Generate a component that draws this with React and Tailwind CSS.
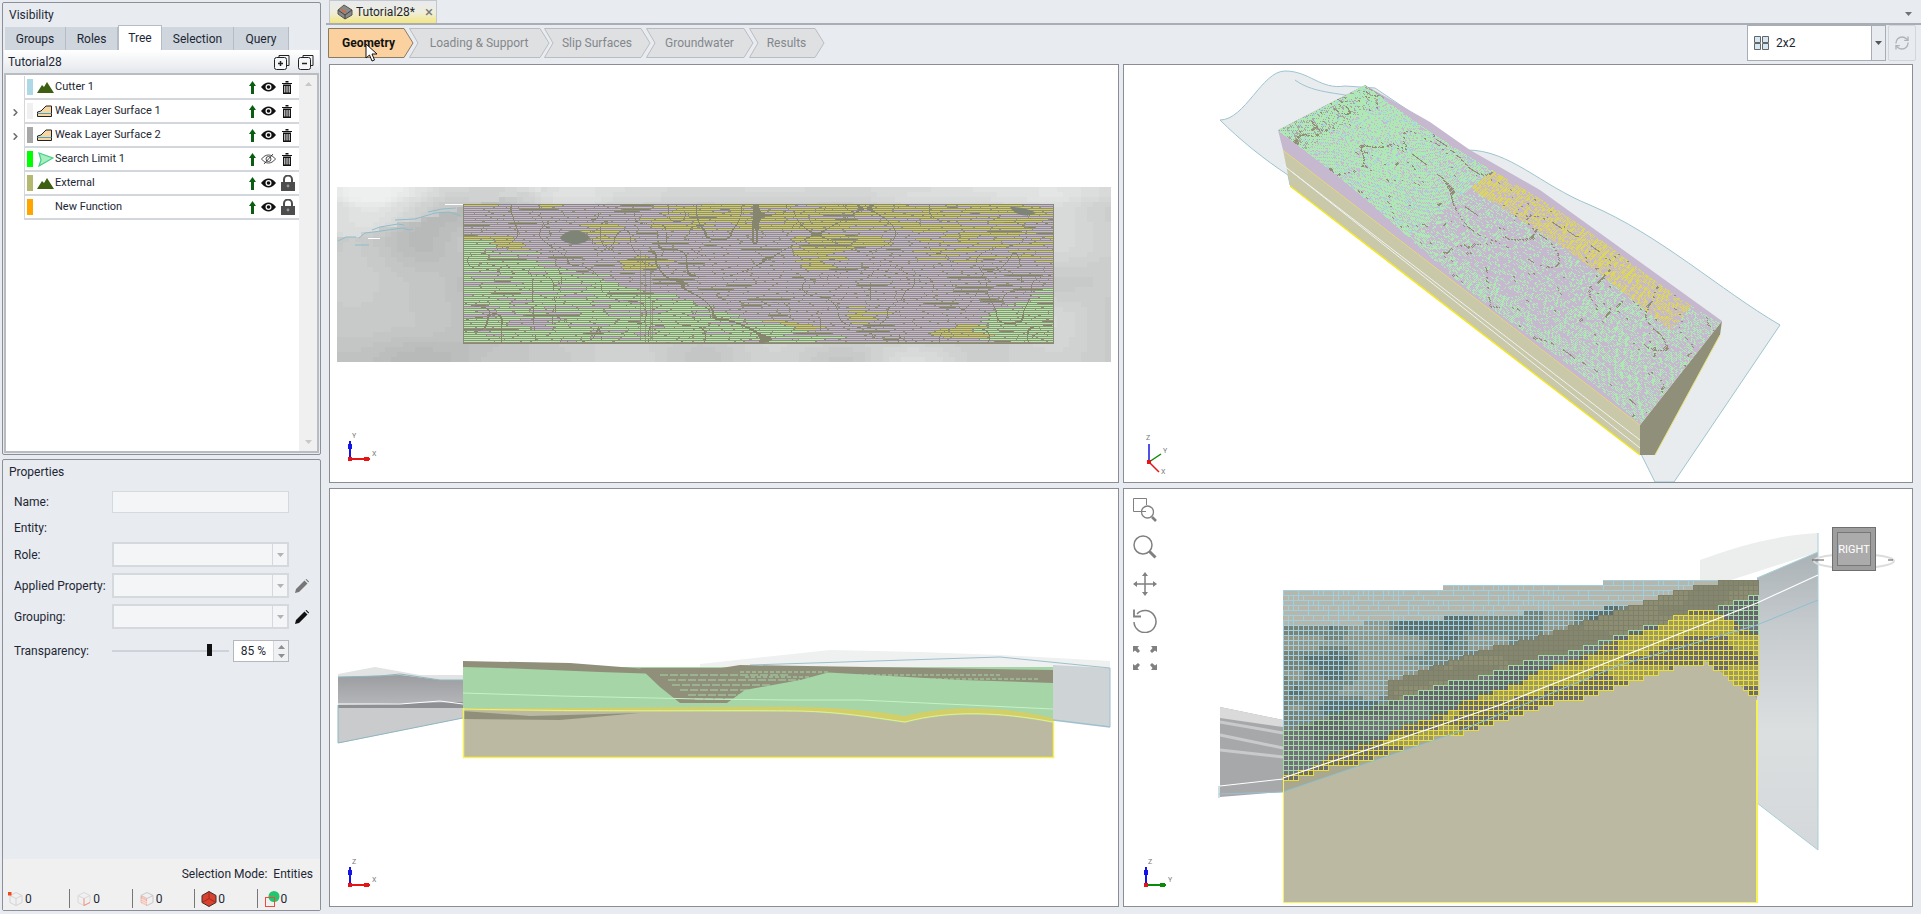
import React from 'react';
import { ChevronRight, RefreshCw } from 'lucide-react';

// deterministic noise so the model views look the same on every render
const hash = (x, y) => {
  const s = Math.sin(x * 127.1 + y * 311.7) * 43758.5453;
  return s - Math.floor(s);
};
const noise = (x, y) => {
  const ix = Math.floor(x), iy = Math.floor(y);
  const fx = x - ix, fy = y - iy;
  const sx = fx * fx * (3 - 2 * fx), sy = fy * fy * (3 - 2 * fy);
  const a = hash(ix, iy), b = hash(ix + 1, iy), c = hash(ix, iy + 1), d = hash(ix + 1, iy + 1);
  return a + (b - a) * sx + (c - a) * sy + (a - b - c + d) * sx * sy;
};

// top view: mottled ground around the block
const planGround = () => {
  const out = {};
  for (let y = 187; y < 361; y += 5) {
    for (let x = 337; x < 1110; x += 6) {
      let g = 208 + (noise(x / 70, y / 40) - 0.5) * 26;
      const d = Math.hypot((x - 368) / 75, (y - 195) / 42);
      if (d < 1) g += (1 - d) * 40;
      if (y > 205 + (463 - x) * 0.25) g -= 16 * Math.max(0, Math.min(1, (600 - x) / 140));
      if (y < 204) g += 10 * Math.min(1, (204 - y) / 10);
      const level = Math.min(238, Math.round(g / 4) * 4);
      const c = `rgb(${level},${level + 2},${level + 2})`;
      out[c] = (out[c] || '') + `M${x} ${y}h6v5h-6z`;
    }
  }
  return out;
};
const planCells = planGround();

// top view: contour dashes inside the block
const planTexture = () => {
  const out = { lilac: '', green: '', yellow: '', tan: '', contour: '' };
  for (let y = 205; y < 343; y += 2) {
    let x = 464;
    while (x < 1052) {
      const len = Math.min(6 + hash(x, y) * 34, 1053 - x);
      const u = (x - 463) / 590, v = (y - 204) / 140;
      const n = noise(x / 45, y / 22);
      let c = 'lilac';
      if (v > 0.28 + u * 1.15 + (n - 0.5) * 0.1) c = hash(y, x) < 0.8 ? 'green' : 'lilac';
      else if (u > 0.86 && v > 0.55 + (1 - u) * 2) c = 'green';
      else if (v < 0.18 && u > 0.3 && u < 0.95) c = hash(y, x) < 0.75 ? 'yellow' : 'lilac';
      else if (v < 0.42 && u > 0.75) c = hash(y, x) < 0.4 ? 'yellow' : 'lilac';
      else if (n < 0.3) c = 'yellow';
      if (hash(x * 2, y) < 0.05) c = 'tan';
      out[c] += `M${x.toFixed(0)} ${y + 0.5}h${len.toFixed(0)}`;
      x += len + 1 + hash(y, x * 3) * 1.500;
    }
  }
  for (let y = 205; y < 343; y += 1) {
    for (let x = 464; x < 1052; x += 1) {
      if (Math.abs(noise(x / 48, y / 26) - 0.5) < 0.006 || Math.abs(noise(x / 26 + 7, y / 40 + 3) - 0.5) < 0.004) {
        out.contour += `M${x} ${y}h1v1h-1z`;
      }
    }
  }
  return out;
};
const plan = planTexture();

// isometric view: dashes and speckle along the long axis of the top face
const isoPoint = (u, v) => {
  const x = (1 - u) * (1 - v) * 1278 + u * (1 - v) * 1640 + (1 - u) * v * 1365 + u * v * 1722;
  const y = (1 - u) * (1 - v) * 130 + u * (1 - v) * 425 + (1 - u) * v * 85 + u * v * 321;
  return [x, y];
};
const isoTexture = () => {
  const out = { green: '', yellow: '', tan: '', blue: '' };
  for (let i = 0; i < 80; i++) {
    const v0 = i / 80;
    for (let j = 0; j < 230; j++) {
      const u = j / 230;
      const v = v0 + Math.sin(u * 9 + v0 * 3) * 0.025;
      const r = hash(i, j);
      let c = null;
      if (u < 0.36 && r < 0.85) c = r < 0.08 ? 'blue' : 'green';
      else if (v0 > 0.74 && u > 0.3 && u < 0.92 && r < 0.65) c = 'yellow';
      else if (v0 < 0.14 && r < 0.6) c = 'green';
      else if (u > 0.72 && r < 0.55) c = 'green';
      else if (r < 0.38) c = 'green';
      if (Math.abs(noise(u * 9, v0 * 5) - 0.5) < 0.008 || Math.abs(noise(u * 22 + 4, v0 * 6 + 9) - 0.5) < 0.005) c = 'tan';
      if (!c) continue;
      const [a, b] = isoPoint(u, v);
      const [d, e] = isoPoint(u + 0.005, v);
      out[c] += `M${a.toFixed(1)} ${b.toFixed(1)}L${d.toFixed(1)} ${e.toFixed(1)}`;
    }
  }
  return out;
};
const iso = isoTexture();

// section view: voxel grid, one path per fill and per line colour
const sectionGrid = () => {
  const fills = {};
  const lines = { blue: '', green: '', yellow: '', tan: '' };
  const fill = (c, d) => { fills[c] = (fills[c] || '') + d; };
  for (let x = 1283; x < 1757; x += 5) {
    for (let y = 575; y < 790; y += 5) {
      const t = (x - 1283) / 474;
      const top = 590 - Math.floor(t * 3) * 5;
      if (y < top) continue;
      const stairX = x - ((x - 1283) % 15);
      const floor = x < 1700 ? 778 - (stairX - 1283) * 0.29 : 657 + (x - 1700) * 0.7;
      if (y > floor) continue;
      const n = noise(x / 38, y / 16);
      const greenTop = 727 - (stairX - 1283) * 0.285;
      const bandTop = greenTop - 18 - t * 10;
      const yellowTop = floor - (5 + t * 55);
      const d = `M${x} ${y}h5v5h-5z`;
      const light = y < 625 - t * 30;
      if (y >= yellowTop) {
        fill(n > 0.55 ? '#a09a5e' : '#6e6c70', d);
        lines.yellow += d;
      } else if (y >= greenTop) {
        fill(n > 0.45 ? '#66646f' : '#72707a', d);
        lines.green += d;
      } else if (y >= bandTop && t > 0.22) {
        fill(n > 0.5 ? '#8d8d74' : '#85866f', d);
        lines.tan += d;
      } else if (light) {
        fill(n > 0.86 ? '#84897f' : '#b6b6aa', d);
        lines.blue += `M${x} ${y}h5` + (hash(x, y) < 0.4 ? `M${x} ${y}v5` : '');
      } else {
        fill(n > 0.66 ? '#5f6f6c' : n > 0.38 ? '#7a8275' : '#969686', d);
        lines.blue += d;
      }
    }
  }
  return { fills, lines };
};
const section = sectionGrid();

const ROWS = [
  { name: 'Cutter 1', color: '#add8e6', icon: 'hill', last: 'trash' },
  { name: 'Weak Layer Surface 1', color: '#f0f0f0', icon: 'layer', last: 'trash', expand: true },
  { name: 'Weak Layer Surface 2', color: '#a8a8a8', icon: 'layer', last: 'trash', expand: true },
  { name: 'Search Limit 1', color: '#00ff00', icon: 'limit', last: 'trash', hidden: true },
  { name: 'External', color: '#b5b86f', icon: 'hill', last: 'lock' },
  { name: 'New Function', color: '#ffa500', last: 'lock' },
];

const TABS = [
  { label: 'Groups', w: 'w-[61px]' },
  { label: 'Roles', w: 'w-[52px]' },
  { label: 'Tree', w: 'w-[44px]', active: true },
  { label: 'Selection', w: 'w-[72px]' },
  { label: 'Query', w: 'w-[55px]' },
];

const STEPS = [
  { label: 'Geometry', w: 'w-[86px]', tip: 85, active: true },
  { label: 'Loading & Support', w: 'w-[141px]', tip: 140, ml: '-ml-[5px]' },
  { label: 'Slip Surfaces', w: 'w-[107px]', tip: 106, ml: '-ml-[6px]' },
  { label: 'Groundwater', w: 'w-[108px]', tip: 107, ml: '-ml-[5px]' },
  { label: 'Results', w: 'w-[76px]', tip: 75, ml: '-ml-[5px]' },
];

const HillIcon = () => (
  <svg width="17" height="11" viewBox="0 0 17 11"><path d="M0 11 5 3 7 5 10 0 17 11z" fill="#3d5f12" /></svg>
);
const LayerIcon = () => (
  <svg width="15" height="12" viewBox="0 0 15 12">
    <path d="M.5 7 4 6l5-5h5.500v10.500H.5z" fill="#f6d7a4" stroke="#222" />
    <path d="M.5 8.500h14" stroke="#4aa3c7" />
  </svg>
);
const LimitIcon = () => (
  <svg width="17" height="15" viewBox="0 0 17 15">
    <path d="M2 1 16 6 2 14l2-6z" fill="#a8eec0" stroke="#3fcf86" strokeWidth="1.200" />
  </svg>
);
const UpArrow = () => (
  <svg width="7" height="13" viewBox="0 0 7 13"><path d="M3.500 0 7 5H5v8H2V5H0z" fill="#0b5d12" /></svg>
);
const EyeIcon = ({ off }) => (
  <svg width="15" height="10" viewBox="0 0 15 10">
    {off ? (
      <>
        <path d="M.5 5C3 2 5 1 7.500 1s4.500 1 7 4c-2.500 3-4.500 4-7 4s-4.500-1-7-4z" fill="none" stroke="#222" strokeWidth=".8" />
        <circle cx="7.500" cy="5" r="2.500" fill="none" stroke="#222" strokeWidth=".8" />
        <path d="M3 10 12 0" stroke="#222" strokeWidth=".8" />
      </>
    ) : (
      <>
        <path d="M0 5C3 1.500 5 .5 7.500.5s4.500 1 7.500 4.500c-3 3.500-5 4.500-7.500 4.500S3 8.500 0 5z" fill="#111" />
        <circle cx="7.500" cy="5" r="3" fill="#fff" />
        <circle cx="7.500" cy="5" r="1.800" fill="#111" />
      </>
    )}
  </svg>
);
const TrashIcon = () => (
  <svg width="10" height="13" viewBox="0 0 10 13">
    <path d="M0 2h10v1H0zM3.500 0h3v1.500h-3z" fill="#111" />
    <path d="M1 3.500h8V13H1z" fill="#111" />
    <path d="M2.800 5v6.500M5 5v6.500M7.200 5v6.500" stroke="#fff" />
  </svg>
);
const LockIcon = () => (
  <svg width="14" height="16" viewBox="0 0 14 16">
    <path d="M3 7V4.500a4 4 0 0 1 8 0V7" fill="none" stroke="#4d4d4d" strokeWidth="2" />
    <path d="M0 7h14v9H0z" fill="#4d4d4d" />
    <circle cx="7" cy="11" r="1.400" fill="#999" />
  </svg>
);
const TreeToggle = ({ minus }) => (
  <svg width="16" height="16" viewBox="0 0 16 16" fill="none" stroke="#222">
    <path d="M5 3V1.500h10v10h-2" />
    <rect x=".5" y="3.500" width="12" height="12" rx="2" fill="#f5f6f8" />
    <path d={minus ? 'M4 9.500h5' : 'M4 9.500h5M6.500 7v5'} strokeWidth="1.500" />
  </svg>
);
const Pencil = ({ dark }) => (
  <svg width="14" height="14" viewBox="0 0 14 14">
    <path d="M0 14 1 10 9.500 1.500 12.500 4.500 4 13z M10.500.5 11.500 0 14 2.500 13.500 3.500z" fill={dark ? '#111' : '#777'} />
  </svg>
);
const Caret = ({ color = '#9a9ea3' }) => (
  <svg width="7" height="4" viewBox="0 0 7 4"><path d="M0 0h7L3.500 4z" fill={color} /></svg>
);

const TreeRow = ({ row }) => (
  <div className="flex items-center h-[24px]">
    <div className="w-[18px] flex justify-center pl-px">
      {row.expand && <ChevronRight size={11} strokeWidth={3.500} className="text-[#6c6c6c]" />}
    </div>
    <div className="flex items-center w-[275px] h-[24px] bg-white border-b-2 border-l border-[#d3d6da] pl-[2px] text-[11px]">
      <div className="w-[6px] h-[16px]" style={{ background: row.color }} />
      <div className="w-[18px] ml-[4px] flex justify-start">
        {row.icon === 'hill' && <HillIcon />}
        {row.icon === 'layer' && <LayerIcon />}
        {row.icon === 'limit' && <LimitIcon />}
      </div>
      <span className="flex-1">{row.name}</span>
      <div className="w-[7px] flex justify-center"><UpArrow /></div>
      <div className="w-[15px] ml-[5px] flex justify-center"><EyeIcon off={row.hidden} /></div>
      <div className="w-[14px] ml-[5px] mr-[4px] flex justify-start">
        {row.last === 'lock' ? <LockIcon /> : <div className="pl-px"><TrashIcon /></div>}
      </div>
    </div>
  </div>
);

const VisibilityPanel = () => (
  <section className="h-[453px] mt-[2px] ml-[2px] border border-[#8b8f97] rounded-[2px] flex flex-col">
    <div className="h-[22px] pl-[6px] pt-[3px] leading-[18px]">Visibility</div>
    <div className="flex items-end h-[25px] pl-[2px]">
      {TABS.map((t) => (
        <div
          key={t.label}
          className={`${t.w} flex items-center justify-center border-r border-[#b5bcc5] ${t.active ? 'h-[25px] bg-white border-t border-l border-[#b5bcc5]' : 'h-[23px] bg-[#cfd6de]'}`}
        >
          {t.label}
        </div>
      ))}
    </div>
    <div className="flex items-center justify-between h-[25px] mx-px pl-[4px] pr-[5px] bg-gradient-to-b from-white to-[#e4e7eb] border-b-2 border-[#b9bcc1]">
      <span>Tutorial28</span>
      <div className="flex gap-[8px]"><TreeToggle /><TreeToggle minus /></div>
    </div>
    <div className="flex-1 mx-px mb-px bg-white border-2 border-t-0 border-[#b9bcc1] flex">
      <div className="w-[293px] pt-px">
        {ROWS.map((r) => <TreeRow key={r.name} row={r} />)}
      </div>
      <div className="flex-1 bg-[#f0f0f0] flex flex-col items-center justify-between py-[7px]">
        <div className="rotate-180"><Caret color="#c8c8c8" /></div>
        <Caret color="#c8c8c8" />
      </div>
    </div>
  </section>
);

const Combo = () => (
  <div className="flex w-[177px] h-[25px] bg-[#f3f5f7] border-2 border-[#d5d8dc]">
    <div className="flex-1" />
    <div className="w-[15px] border-l border-[#d5d8dc] flex items-center justify-center"><Caret color="#b0b4b8" /></div>
  </div>
);

const PropRow = ({ label, className = '', children }) => (
  <div className={`flex items-center pl-[11px] ${className}`}>
    <span className="w-[98px] shrink-0">{label}</span>
    {children}
  </div>
);

const PropertiesPanel = () => (
  <section className="h-[452px] mt-[4px] ml-[2px] border border-[#8b8f97] rounded-[2px] flex flex-col">
    <div className="h-[31px] pl-[6px] pt-[3px] leading-[18px]">Properties</div>
    <PropRow label="Name:" className="h-[22px]">
      <div className="w-[177px] h-[22px] bg-[#f3f5f7] border border-[#d5d8dc]" />
    </PropRow>
    <PropRow label="Entity:" className="h-[16px] mt-[7px]" />
    <PropRow label="Role:" className="h-[25px] mt-[6px]"><Combo /></PropRow>
    <PropRow label="Applied Property:" className="h-[25px] mt-[6px]">
      <Combo />
      <div className="ml-[6px]"><Pencil /></div>
    </PropRow>
    <PropRow label="Grouping:" className="h-[25px] mt-[6px]">
      <Combo />
      <div className="ml-[6px]"><Pencil dark /></div>
    </PropRow>
    <PropRow label="Transparency:" className="h-[22px] mt-[11px]">
      <div className="relative w-[117px] h-[2px] bg-[#cfd2da]">
        <div className="absolute left-[95px] -top-[6px] w-[5px] h-[12px] bg-[#111]" />
      </div>
      <div className="flex w-[56px] h-[22px] ml-[4px] bg-white border border-[#b4b8be]">
        <div className="flex-1 flex items-center justify-center">85 %</div>
        <div className="w-[15px] border-l border-[#d5d8dc] flex flex-col items-center justify-center gap-[5px] bg-[#f0f1f3]">
          <div className="rotate-180"><Caret color="#8c8f94" /></div>
          <Caret color="#8c8f94" />
        </div>
      </div>
    </PropRow>
    <div className="mt-auto h-[51px] bg-[#f0f0f0]">
      <div className="h-[30px] pr-[7px] flex items-center justify-end">Selection Mode:&nbsp; Entities</div>
      <StatusBar />
    </div>
  </section>
);

const Hex = ({ children }) => (
  <svg width="16" height="16" viewBox="0 0 16 16" fill="none">{children}</svg>
);
const STATUS = [
  <Hex key="a"><path d="M8 1.500 14 4.500v7L8 14.500 2 11.500v-7zM2 4.500 8 7.500l6-3M8 7.500v7" stroke="#d4d4d4" /><rect x="0" y="1" width="3.500" height="3.500" fill="#f04a1a" /></Hex>,
  <Hex key="b"><path d="M8 1.500 14 4.500v7L8 14.500 2 11.500v-7zM2 4.500 8 7.500l6-3" stroke="#d8d8d8" /><path d="M8 7.500v7l6-3" stroke="#f0907a" /></Hex>,
  <Hex key="c"><path d="M8 1.500 14 4.500v7L8 14.500 2 11.500v-7zM2 4.500 8 7.500l6-3" stroke="#c8c8c8" /><path d="M2 5 8 8v6.500l-6-3z" fill="#f8a898" /><path d="M2 8l6 3M2 10l6 3M4 6v7M6 7v7" stroke="#fde0d8" /></Hex>,
  <Hex key="d"><path d="M8 .500 15 4.500v7L8 15.500 1 11.500v-7z" fill="#d9402e" stroke="#333" /><path d="M1 11.500 8 7.500V.500M8 7.500l7 4" stroke="#a32a1c" /></Hex>,
  <Hex key="e"><circle cx="10" cy="5.500" r="5.500" fill="#22c66e" /><rect x="1.500" y="6.500" width="9" height="9" stroke="#f04a3a" fill="none" /></Hex>,
];
const StatusBar = () => (
  <div className="flex h-[21px] pl-[5px]">
    {STATUS.map((icon, i) => (
      <div key={i} className={`w-[64px] flex items-center gap-px ${i < 4 ? 'border-r border-[#777] mb-[2px]' : 'mb-[2px]'} ${i > 0 ? 'pl-[6px]' : ''}`}>
        {icon}
        <span className="leading-none">0</span>
      </div>
    ))}
  </div>
);

const DocTabs = () => (
  <div className="flex items-end justify-between h-[25px] border-b-2 border-[#a9adb5]">
    <div className="flex items-center gap-[3px] w-[108px] h-[23px] ml-[3px] pl-[7px] border border-b-0 border-[#c3c6ca] bg-gradient-to-b from-[#e8eaee] via-[#efeedd] to-[#f4e67c]">
      <svg width="16" height="16" viewBox="0 0 16 16">
        <path d="M1 6 7 1l8 5v5l-7 4-7-5z" fill="#8a8a8a" stroke="#555" />
        <path d="M1 6l7 5 7-5M8 11v4" stroke="#444" fill="none" />
        <path d="M4 5l5 3.500" stroke="#e8662a" strokeWidth="1.500" />
      </svg>
      <span>Tutorial28*</span>
      <span className="ml-[7px] text-[#777] text-[15px] leading-none">×</span>
    </div>
    <div className="mr-[9px] mb-[7px]"><Caret color="#6e7278" /></div>
  </div>
);

const Stepper = () => (
  <div className="flex items-start justify-between h-[39px] pl-[2px] pr-[5px]">
    <div className="flex items-center mt-[3px]">
      {STEPS.map((s) => (
        <div key={s.label} className={`relative flex items-center justify-center h-[30px] ${s.w} ${s.ml || ''}`}>
          <svg className="absolute inset-0 w-full h-full">
            <path
              d={`M.5 .5H${s.tip - 9}L${s.tip} 15 ${s.tip - 9} 29.500H.5${s.active ? '' : 'L9 15'}z`}
              fill={s.active ? '#fbd29f' : '#dfe0e2'}
              stroke={s.active ? '#8a7a62' : '#b9bcc0'}
            />
          </svg>
          <span className={`relative ${s.active ? 'font-bold text-[#111] pr-[5px]' : 'text-[#83878c] pr-[1px]'}`}>{s.label}</span>
        </div>
      ))}
    </div>
    <div className="flex gap-[2px]">
      <div className="flex w-[139px] h-[36px] bg-white border border-[#a8acb4]">
        <div className="flex-1 flex items-center gap-[7px] pl-[6px]">
          <svg width="15" height="14" viewBox="0 0 15 14">
            <path d="M.5.500h6v6h-6zM8.500.500h6v6h-6zM.5 7.500h6v6h-6zM8.500 7.500h6v6h-6z" fill="#d4e8f4" stroke="#666" />
          </svg>
          <span>2x2</span>
        </div>
        <div className="w-[14px] border-l border-[#a8acb4] bg-[#e8ebef] flex items-center justify-center"><Caret color="#555" /></div>
      </div>
      <div className="w-[28px] h-[36px] flex items-center justify-center bg-[#e8ebef] border border-[#d2d5da] rounded-[2px]">
        <RefreshCw size={16} className="text-[#b0b3b7]" />
      </div>
    </div>
  </div>
);

const Axes = ({ x, y, kind }) => {
  const label = 'fill-[#777] text-[7px]';
  if (kind === 'iso') {
    return (
      <g fill="none" strokeWidth="1.500">
        <path d={`M${x} ${y}l12-8`} stroke="#0a8a0a" />
        <path d={`M${x} ${y}V${y - 18}`} stroke="#1414e6" />
        <path d={`M${x} ${y}l10 10`} stroke="#e61414" />
        <rect x={x - 2} y={y - 2} width="4" height="4" fill="#e61414" stroke="none" />
        <text x={x - 3} y={y - 22} className={label} stroke="none">Z</text>
        <text x={x + 14} y={y - 9} className={label} stroke="none">Y</text>
        <text x={x + 12} y={y + 12} className={label} stroke="none">X</text>
      </g>
    );
  }
  const hColor = kind === 'right' ? '#0a8a0a' : '#e61414';
  return (
    <g>
      <path d={`M${x} ${y}h20`} stroke={hColor} strokeWidth="2" />
      <path d={`M${x + 14} ${y - 2}h5v4h-5z`} fill={hColor} />
      <path d={`M${x} ${y}V${y - 18}`} stroke="#1414e6" strokeWidth="2" />
      <path d={`M${x - 2} ${y - 15}h4v5h-4z`} fill="#1414e6" />
      <rect x={x - 2} y={y - 2} width="4" height="4" fill="#e61414" />
      <text x={x + 2} y={y - 21} className={label}>{kind === 'plan' ? 'Y' : 'Z'}</text>
      <text x={x + 22} y={y - 3} className={label}>{kind === 'right' ? 'Y' : 'X'}</text>
    </g>
  );
};

const PlanView = () => (
  <svg viewBox="330 65 788 417" className="block w-full h-full" shapeRendering="crispEdges">
    {Object.entries(planCells).map(([c, d]) => <path key={c} d={d} fill={c} />)}
    <g fill="none" stroke="#8ebccb" shapeRendering="auto">
      <path d="M338 241l8-4h10M359 238l6-5 16-2 14-2 8-1 6 2 4-1M395 220l20-1 20-6 14-1 12 4M372 230l8-3 18-3 6 1" />
      <path d="M355 245h14M428 212l14-3 14-1" />
    </g>
    <path d="M445 204h18M368 238h12" stroke="#fff" />
    <rect x="463" y="204" width="590" height="140" fill="#90907c" />
    <path d={plan.lilac} stroke="#c6b5da" fill="none" />
    <path d={plan.green} stroke="#aeeca6" fill="none" />
    <path d={plan.yellow} stroke="#cfcb5e" fill="none" />
    <path d={plan.tan} stroke="#86866f" fill="none" />
    <path d={plan.contour} fill="#86866e" />
    <path d="M640 250v90M645 255v85M650 270v70M652 300v40" stroke="#8a8a70" strokeOpacity=".7" fill="none" />
    <path d="M560 238c6-10 24-10 30 0-6 8-24 8-30 0zM1010 207c10 0 20 2 26 6-8 4-20 4-26-6z" fill="#7f8576" shapeRendering="auto" />
    <rect x="463.500" y="204.500" width="590" height="139" fill="none" stroke="#8a8a72" />
    <Axes x={350} y={459} kind="plan" />
  </svg>
);

const IsoView = () => (
  <svg viewBox="1124 65 788 417" className="block w-full h-full">
    <defs>
      <clipPath id="isoTop"><path d="M1365 85 1430 122 1470 150 1540 190 1722 321 1640 425 1283 150 1278 130z" /></clipPath>
    </defs>
    <path
      d="M1220 120C1245 120 1262 71 1285 71C1310 71 1320 90 1345 86L1375 88 1467 150C1510 150 1540 185 1590 205C1660 235 1720 290 1780 325L1674 482H1655L1640 452 1290 185 1288 175C1265 160 1240 140 1220 120Z"
      fill="#e8ecee"
      stroke="#9dc4d1"
    />
    <path d="M1295 80C1315 95 1345 92 1365 100" fill="none" stroke="#9dc4d1" />
    <path d="M1283 150 1640 425V455L1290 185z" fill="#c9c8a8" />
    <path d="M1283 165 1640 440M1292 172 1640 448" stroke="#eef2f2" fill="none" />
    <path d="M1290 186 1640 455" stroke="#f2e61e" strokeWidth="1.500" fill="none" />
    <path d="M1283 150 1640 425" stroke="#ffe92e" fill="none" />
    <path d="M1640 425 1722 321 1720 335 1655 455 1640 455z" fill="#90907a" />
    <path d="M1655 455 1720 335" stroke="#e8e27a" fill="none" />
    <g clipPath="url(#isoTop)" shapeRendering="crispEdges">
      <rect x="1270" y="80" width="460" height="350" fill="#c6b9cf" />
      <path d="M1278 130 1365 85 1385 98 1305 150z" fill="#8f917c" opacity=".5" />
      <path d={iso.green} stroke="#aee8b4" fill="none" />
      <path d={iso.blue} stroke="#a6d4df" fill="none" />
      <path d={iso.yellow} stroke="#dcd75c" fill="none" />
      <path d={iso.tan} stroke="#8f8f74" fill="none" />
    </g>
    <Axes x={1149} y={462} kind="iso" />
  </svg>
);

const FrontView = () => (
  <svg viewBox="330 489 788 417" className="block w-full h-full" shapeRendering="geometricPrecision">
    <defs>
      <linearGradient id="frontLeft" x1="0" y1="0" x2="0" y2="1">
        <stop offset="0" stopColor="#9b9da0" />
        <stop offset="1" stopColor="#b4b6b9" />
      </linearGradient>
    </defs>
    <path d="M700 664 830 650 920 652 1000 655 1110 661V670L700 668z" fill="#eff0f0" />
    <path d="M338 674 375 667 420 675 463 675V690H338z" fill="#e2e3e3" />
    <path d="M338 677 400 675 440 680 463 680V705L338 705z" fill="url(#frontLeft)" />
    <path d="M338 705 463 705V718L340 743 338 743z" fill="#c9cbcd" />
    <path d="M338 705 463 702V708L338 708z" fill="#8e9093" />
    <path d="M338 743 463 718M338 677 380 676 400 674 440 680 463 680M338 705V743" stroke="#8fb6c2" fill="none" />
    <path d="M338 704 400 704 440 701 463 704" stroke="#fff" fill="none" />
    <path d="M1053 665 1110 668V727L1053 720z" fill="#ced3d6" />
    <path d="M750 665 1000 657 1110 668" stroke="#9cc0cc" fill="none" />
    <path d="M1053 720 1110 727" stroke="#9cc0cc" strokeWidth="1.500" />
    <path d="M1110 668V727" stroke="#9cc0cc" />
    <path d="M463 667H1053V725H463z" fill="#a6d5a8" />
    <path d="M463 661 570 663 660 670 715 669 740 665 1053 670V683L960 680 820 672 800 680 720 676 600 672 500 668 463 667z" fill="#90907a" />
    <path d="M640 668 660 687 680 703 727 703 745 690 800 680 830 672 760 668z" fill="#90907a" />
    <g stroke="#a6d5a8" strokeWidth="1.200">
      <path d="M660 675H790M668 680H800M672 685H770M680 690H760M688 695H745M695 699H735" strokeDasharray="8 2" />
      <path d="M740 672H830M745 677H810M840 675H1000M860 679H1040" strokeDasharray="4 2" />
    </g>
    <path d="M463 693 560 696 700 699 790 700 860 700 1053 709" fill="none" stroke="#c6f2c4" />
    <path d="M463 708C600 709 740 706 800 707 850 708 880 712 905 716 950 705 1000 706 1053 718V722C1000 712 950 710 905 722 870 716 840 712 800 711 720 710 600 713 463 711z" fill="#d3cf68" />
    <path d="M463 710C600 713 720 711 800 712 840 713 870 718 905 723 950 711 1000 713 1053 723V758H463z" fill="#bcb9a3" />
    <path d="M463 711 530 716 640 713 560 720 463 719z" fill="#90907a" />
    <path d="M463 709C600 712 720 710 800 711 840 712 870 717 905 722 950 710 1000 712 1053 722" fill="none" stroke="#e8ef8a" />
    <path d="M463.500 708V757.500H1053.500V721" fill="none" stroke="#f6f254" strokeWidth="1.500" />
    <Axes x={350} y={885} kind="front" />
  </svg>
);

const SectionView = () => (
  <svg viewBox="1124 489 788 417" className="block w-full h-full" shapeRendering="crispEdges">
    <defs>
      <linearGradient id="sideTerrain" x1="0" y1="0" x2="0" y2="1">
        <stop offset="0" stopColor="#aab2b6" />
        <stop offset=".25" stopColor="#c6cbce" />
        <stop offset=".6" stopColor="#dcdfe0" />
        <stop offset="1" stopColor="#d4d8da" />
      </linearGradient>
    </defs>
    <g shapeRendering="auto">
      <path d="M1700 560C1740 545 1780 535 1818 533V552L1700 590z" fill="#eceded" />
      <path d="M1757 578 1818 552V850L1757 803z" fill="url(#sideTerrain)" />
      <path d="M1757 578 1818 552M1818 533V850L1757 803" fill="none" stroke="#a8cfd8" />
      <path d="M1649 662C1700 700 1745 760 1757 834" fill="none" stroke="#8e9c90" />
      <path d="M1220 707 1283 720V792L1220 797z" fill="#a6a8aa" />
      <path d="M1220 707 1283 720V727L1220 718z" fill="#dadada" />
      <path d="M1220 722 1283 733M1220 735 1283 748M1220 750 1283 757" stroke="#c8cacc" strokeWidth="3" />
      <path d="M1219 794 1283 792M1219 786V798" fill="none" stroke="#9cc0cc" />
      <path d="M1220 786 1283 779" stroke="#fff" />
    </g>
    <path d="M1283 775 1700 650 1757 690V903H1283z" fill="#a9a78e" />
    <path d="M1283 792 1450 735 1620 665 1700 657 1757 698V903H1283z" fill="#bcb9a3" />
    {Object.entries(section.fills).map(([c, d]) => <path key={c} d={d} fill={c} />)}
    <path d={section.lines.blue} stroke="#9ed0e2" fill="none" />
    <path d={section.lines.tan} stroke="#7f8068" fill="none" />
    <path d={section.lines.green} stroke="#a2dca2" fill="none" />
    <path d={section.lines.yellow} stroke="#e6df3c" fill="none" />
    <g shapeRendering="auto" fill="none">
      <path d="M1283 792 1450 735 1620 665 1757 625 1818 600" stroke="#8fc0d0" />
      <path d="M1283 778 1500 705 1757 603 1818 575" stroke="#fff" strokeWidth="1.200" />
    </g>
    <path d="M1283.500 778V902.500H1757V700" fill="none" stroke="#f6f254" strokeWidth="1.500" />
    <Axes x={1146} y={885} kind="right" />
  </svg>
);

const NavIcons = () => (
  <div className="absolute left-[9px] top-[9px] flex flex-col gap-[13px] text-[#808080]">
    <svg width="24" height="24" viewBox="0 0 24 24" fill="none" stroke="currentColor">
      <path d="M13 13.500H.5V.5h13V7" strokeWidth="1" />
      <circle cx="14.500" cy="14" r="6" strokeWidth="1.300" />
      <path d="M19 19l4 4" strokeWidth="2.600" />
    </svg>
    <svg width="24" height="24" viewBox="0 0 24 24" fill="none" stroke="currentColor">
      <circle cx="10" cy="10" r="9" strokeWidth="1.500" />
      <path d="M16.500 16.500l6 6" strokeWidth="3" />
    </svg>
    <svg width="24" height="24" viewBox="0 0 24 24" fill="none" stroke="currentColor" strokeWidth="1.500">
      <path d="M12 2v20M2 12h20" />
      <path d="M12 0 9 4h6zM12 24l-3-4h6zM0 12l4-3v6zM24 12l-4-3v6z" fill="currentColor" stroke="none" />
    </svg>
    <svg width="24" height="24" viewBox="0 0 24 24" fill="none" stroke="currentColor" strokeWidth="1.500">
      <path d="M4 5a11 11 0 1 1-3 8" />
      <path d="M1 .5v7h7" strokeWidth="1.800" />
    </svg>
    <svg width="24" height="24" viewBox="0 0 24 24" fill="currentColor">
      <path d="M0 0h6L4.500 2 7 5 5 7 2 4.500 0 6zM24 0v6l-2-1.500L19 7l-2-2 2.500-3L18 0zM0 24v-6l2 1.500L5 17l2 2-2.500 3L6 24zM24 24h-6l1.500-2L17 19l2-2 3 2.500L24 18z" />
    </svg>
  </div>
);

const ViewCube = () => (
  <div className="absolute left-[708px] top-[38px] w-[44px] h-[44px]">
    <svg className="absolute -left-[20px] top-[26px] overflow-visible" width="90" height="20" viewBox="0 0 90 20">
      <ellipse cx="42" cy="8" rx="40" ry="7" fill="none" stroke="#dcdcdc" strokeWidth="2" />
      <path d="M0 7h12M76 7h5M34 17h2M43 17h3M50 17h3" stroke="#555" />
    </svg>
    <div className="relative w-[44px] h-[44px] bg-[#9e9e9e] border border-[#6f6f6f] p-[4px]">
      <div className="w-full h-full bg-[#ababab] border border-[#777] flex items-center justify-center text-[11px] text-white [font-family:Roboto,sans-serif] leading-none">RIGHT</div>
    </div>
  </div>
);

const Cursor = () => (
  <svg className="absolute left-[39px] top-[43px]" width="13" height="19" viewBox="0 0 13 19">
    <path d="M1 1v14l3.500-3 2.500 6 2.500-1-2.500-6h5z" fill="#fff" stroke="#111" />
  </svg>
);

export default function App() {
  return (
    <div className="flex w-[1921px] h-[914px] overflow-hidden bg-[#e8ebf0] text-[12px] text-[#1d2733] [font-family:Roboto,sans-serif]">
      <div className="w-[326px] shrink-0 pr-[5px]">
        <VisibilityPanel />
        <PropertiesPanel />
      </div>
      <div className="flex-1 flex flex-col relative">
        <DocTabs />
        <Stepper />
        <div className="grid grid-cols-[790px_790px] grid-rows-[419px_419px] gap-x-[4px] gap-y-[5px] ml-[3px]">
          <div className="bg-white border border-[#8a8d93]"><PlanView /></div>
          <div className="bg-white border border-[#8a8d93]"><IsoView /></div>
          <div className="bg-white border border-[#8a8d93]"><FrontView /></div>
          <div className="relative bg-white border border-[#8a8d93]">
            <SectionView />
            <NavIcons />
            <ViewCube />
          </div>
        </div>
        <Cursor />
      </div>
    </div>
  );
}
